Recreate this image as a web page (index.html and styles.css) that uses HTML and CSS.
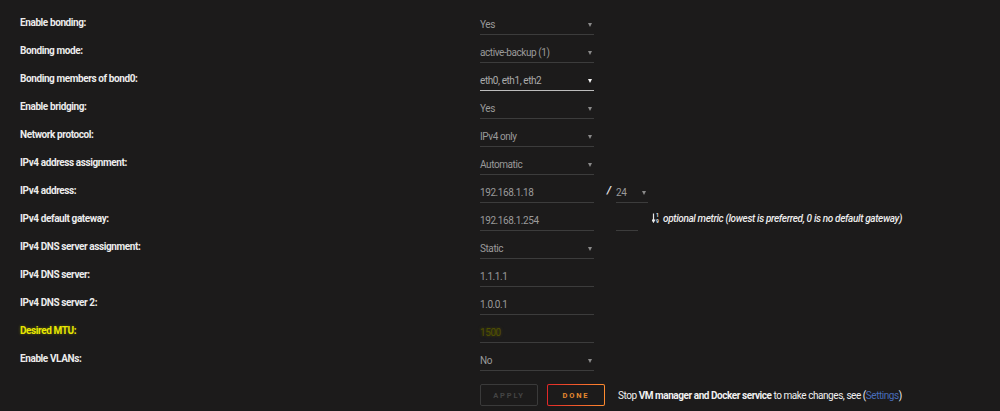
FILE: index.html
```html
<!DOCTYPE html>
<html>
<head>
<meta charset="utf-8">
<link rel="stylesheet" href="styles.css">
</head>
<body>
<div class="form">
  <div class="row"><div class="label">Enable bonding:</div><div class="field"><div class="select">Yes<span class="caret"></span></div></div></div>
  <div class="row"><div class="label">Bonding mode:</div><div class="field"><div class="select">active-backup (1)<span class="caret"></span></div></div></div>
  <div class="row"><div class="label">Bonding members of bond0:</div><div class="field"><div class="select active">eth0, eth1, eth2<span class="caret"></span></div></div></div>
  <div class="row"><div class="label">Enable bridging:</div><div class="field"><div class="select">Yes<span class="caret"></span></div></div></div>
  <div class="row"><div class="label">Network protocol:</div><div class="field"><div class="select">IPv4 only<span class="caret"></span></div></div></div>
  <div class="row"><div class="label">IPv4 address assignment:</div><div class="field"><div class="select">Automatic<span class="caret"></span></div></div></div>
  <div class="row"><div class="label">IPv4 address:</div><div class="field"><div class="input">192.168.1.18</div><span class="slash">/</span><div class="select small">24<span class="caret"></span></div></div></div>
  <div class="row"><div class="label">IPv4 default gateway:</div><div class="field"><div class="input">192.168.1.254</div><div class="input metric"></div><span class="sorticon"><svg width="8" height="10" viewBox="0 0 8 10"><path d="M1.5 0.5v8M0 6.5l1.5 2.5 1.5-2.5" stroke="#e8e8e8" stroke-width="1.2" fill="none"/><text x="4" y="4.4" font-size="5" font-weight="bold" fill="#e8e8e8" font-family="Roboto, sans-serif">1</text><text x="4" y="9.6" font-size="5" font-weight="bold" fill="#e8e8e8" font-family="Roboto, sans-serif">9</text></svg></span><span class="note">optional metric (lowest is preferred, 0 is no default gateway)</span></div></div>
  <div class="row"><div class="label">IPv4 DNS server assignment:</div><div class="field"><div class="select">Static<span class="caret"></span></div></div></div>
  <div class="row"><div class="label">IPv4 DNS server:</div><div class="field"><div class="input">1.1.1.1</div></div></div>
  <div class="row"><div class="label">IPv4 DNS server 2:</div><div class="field"><div class="input">1.0.0.1</div></div></div>
  <div class="row"><div class="label warn">Desired MTU:</div><div class="field"><div class="input warnval">1500</div></div></div>
  <div class="row"><div class="label">Enable VLANs:</div><div class="field"><div class="select">No<span class="caret"></span></div></div></div>
  <div class="actions">
    <button class="btn apply">APPLY</button>
    <button class="btn done">DONE</button>
    <span class="msg">Stop <b>VM manager and Docker service</b> to make changes, see (<a class="link">Settings</a>)</span>
  </div>
</div>
</body>
</html>
```
FILE: styles.css
```css
html, body {
  margin: 0;
  padding: 0;
  background: #1c1b1b;
}
body {
  font-family: Roboto, "Noto Sans", sans-serif;
  font-size: 10px;
  color: #f2f2f2;
}
.form {
  padding: 8px 0 0 20px;
}
.row {
  display: flex;
  align-items: center;
  height: 28px;
}
.label {
  width: 460px;
  font-weight: bold;
  color: #ececec;
  letter-spacing: -0.4px;
}
.label.warn {
  color: #e8e800;
  text-shadow: 0 0 3px rgba(200, 200, 0, 0.45);
}
.field {
  display: flex;
  align-items: center;
  height: 100%;
}
.select, .input {
  position: relative;
  box-sizing: border-box;
  width: 114px;
  height: 20px;
  line-height: 16px;
  padding-top: 2px;
  border-bottom: 1px solid #3c3c3c;
  color: #9a9a9a;
  letter-spacing: -0.42px;
  margin-top: 5px;
}
.select.active {
  border-bottom-color: #bdbdbd;
  color: #ababab;
}
.caret {
  position: absolute;
  right: 2px;
  top: 8px;
  width: 0;
  height: 0;
  border-left: 2.5px solid transparent;
  border-right: 2.5px solid transparent;
  border-top: 4px solid #8a8a8a;
}
.select.active .caret {
  border-top-color: #f5f5f5;
}
.slash {
  margin-left: 13px;
  margin-right: 5px;
  font-weight: bold;
  font-style: italic;
  color: #e8e8e8;
  font-size: 11px;
}
.select.small {
  width: 32px;
}
.input.metric {
  width: 22px;
  margin-left: 22px;
}
.sorticon {
  display: inline-flex;
  margin-left: 14px;
  margin-right: 3px;
  margin-top: -1px;
}
.note {
  font-style: italic;
  font-weight: 500;
  color: #ececec;
  letter-spacing: -0.35px;
}
.warnval {
  color: #505000;
  text-shadow: 0 0 3px rgba(110, 110, 0, 0.6);
}
.actions {
  display: flex;
  align-items: center;
  margin-left: 460px;
  margin-top: 12px;
}
.btn {
  box-sizing: border-box;
  width: 58px;
  height: 22px;
  background: transparent;
  border-radius: 2px;
  font-family: Roboto, sans-serif;
  font-weight: bold;
  font-size: 7.5px;
  letter-spacing: 1.8px;
  padding: 0;
  margin-right: 9px;
}
.apply {
  border: 1px solid #3a3a3a;
  color: #444;
}
.done {
  border: 1px solid transparent;
  background: linear-gradient(#1c1b1b, #1c1b1b) padding-box, linear-gradient(90deg, #e22828, #ff8c2f) border-box;
  color: #e5892f;
  margin-right: 13px;
}
.msg {
  color: #f0f0f0;
  letter-spacing: -0.45px;
}
.msg b {
  font-weight: bold;
}
.link {
  color: #486dba;
}
```
